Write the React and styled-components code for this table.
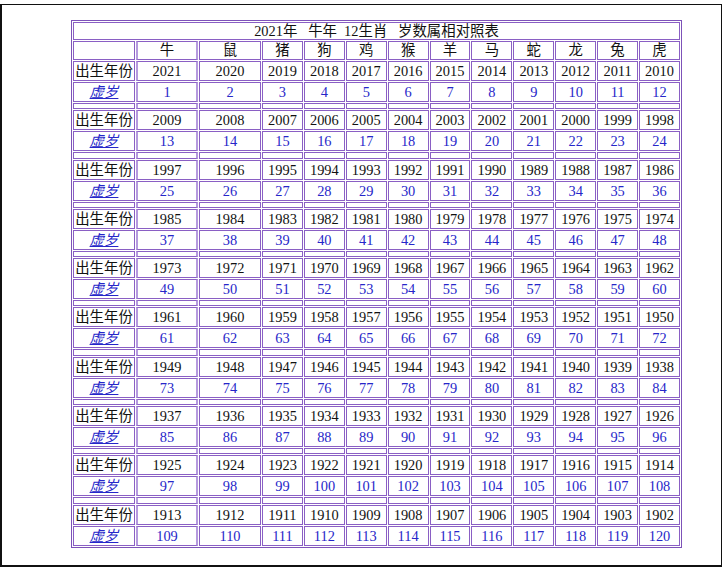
import React from 'react';
import styled, { createGlobalStyle } from 'styled-components';

const GlobalStyle = createGlobalStyle`
  html, body {
    margin: 0;
    padding: 0;
    background: #fff;
  }
  body {
    font-family: "Liberation Serif", "Noto Sans CJK SC", serif;
  }
`;

const ANIMALS = ['牛', '鼠', '猪', '狗', '鸡', '猴', '羊', '马', '蛇', '龙', '兔', '虎'];
const GROUPS = Array.from({ length: 10 }, (_, g) => ({
  years: ANIMALS.map((_, i) => 2021 - g * 12 - i),
  ages: ANIMALS.map((_, i) => g * 12 + i + 1),
}));

const Frame = styled.div`
  box-sizing: border-box;
  margin-top: 4px;
  width: 722px;
  height: 563px;
  border: 1px solid #111;
  border-left-width: 2px;
  border-bottom-width: 2px;
  padding: 15px 0 0 69px;
`;

const Table = styled.table`
  width: 611px;
  table-layout: fixed;
  border: 1px solid #7d52b8;
  border-collapse: separate;
  border-spacing: 1px;
  font-size: 14.4px;
  color: #111;
`;

const Col = styled.col`
  width: ${(p) => p.$w || 'auto'};
`;

const Cell = styled.td`
  border: 1px solid #8a5fc4;
  padding: 0;
  text-align: center;
  white-space: nowrap;
  overflow: hidden;
  line-height: ${(p) => p.$lh || 18}px;
  color: ${(p) => (p.$blue ? '#2626c9' : '#111')};
  ${(p) => p.$soft && `
    border-left: 2px solid #b59ade;
    border-right: 2px solid #b59ade;
  `}
`;

const Title = styled(Cell)`
  line-height: 16px;
`;

const AgeLabel = styled.span`
  color: #2626c9;
  text-decoration: underline;
  font-style: italic;
`;

const Gap = styled.div`
  height: 4.3px;
`;

const GapCell = styled(Cell)`
  line-height: 0;
  font-size: 0;
`;

export default function App() {
  return (
    <>
      <GlobalStyle />
      <Frame>
        <Table>
          <colgroup>
            <Col $w="62px" />
            <Col $w="62px" />
            <Col $w="62px" />
            {ANIMALS.slice(3).map((a) => (
              <Col key={a} />
            ))}
          </colgroup>
          <tbody>
            <tr>
              <Title colSpan={13}>
                2021年&nbsp;&nbsp;&nbsp;牛年&nbsp;&nbsp;12生肖&nbsp;&nbsp;&nbsp;岁数属相对照表
              </Title>
            </tr>
            <tr>
              <Cell $lh={17} />
              {ANIMALS.map((a, i) => (
                <Cell key={a} $lh={17} $soft={i === 0}>
                  {a}
                </Cell>
              ))}
            </tr>
            {GROUPS.map((grp, g) => (
              <React.Fragment key={g}>
                <tr>
                  <Cell>出生年份</Cell>
                  {grp.years.map((y, i) => (
                    <Cell key={y} $soft={i === 0}>
                      {y}
                    </Cell>
                  ))}
                </tr>
                <tr>
                  <Cell>
                    <AgeLabel>虚岁</AgeLabel>
                  </Cell>
                  {grp.ages.map((n, i) => (
                    <Cell key={n} $blue $soft={i === 0}>
                      {n}
                    </Cell>
                  ))}
                </tr>
                {g < GROUPS.length - 1 && (
                  <tr>
                    <GapCell>
                      <Gap />
                    </GapCell>
                    {ANIMALS.map((a, i) => (
                      <GapCell key={a} $soft={i === 0}>
                        <Gap />
                      </GapCell>
                    ))}
                  </tr>
                )}
              </React.Fragment>
            ))}
          </tbody>
        </Table>
      </Frame>
    </>
  );
}
